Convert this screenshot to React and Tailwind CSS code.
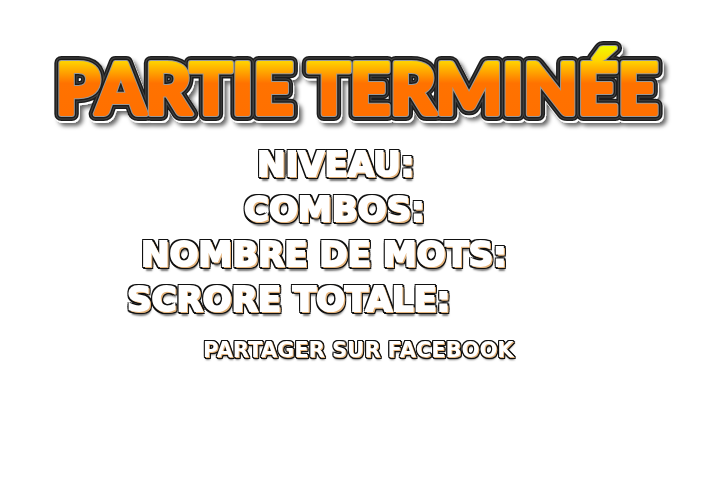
const outlined =
  "font-['DejaVu_Sans',sans-serif] font-bold text-white whitespace-nowrap";

const largeEdge =
  "[-webkit-text-stroke:2px_white] [text-shadow:2px_2px_0_#e5b47c,2px_1px_0_#e5b47c,1px_2px_0_#e5b47c,-2px_-2px_0_#111,0px_-2px_0_#111,2px_-2px_0_#111,-2px_0px_0_#111,-2px_2px_0_#111,3px_-1px_0_#111,3px_1px_0_#111,3px_3px_0_#111,1px_3px_0_#111,-1px_3px_0_#111,2px_5px_2px_#0008]";

const smallEdge =
  "[text-shadow:1px_1px_0_#e5b47c,-1px_-1px_0_#111,0px_-1px_0_#111,1px_-1px_0_#111,-1px_0px_0_#111,-1px_1px_0_#111,2px_0px_0_#111,2px_1px_0_#111,2px_2px_0_#111,1px_2px_0_#111,0px_2px_0_#111,1px_3px_2px_#0008]";

const rows = [
  { label: "NIVEAU:", indent: "pl-[257px]" },
  { label: "COMBOS:", indent: "pl-[244px]" },
  { label: "NOMBRE DE MOTS:", indent: "pl-[141px]" },
  { label: "SCRORE TOTALE:", indent: "pl-[127px]" },
];

function Title() {
  return (
    <h1 className="w-full">
      <svg viewBox="0 0 720 142" className="block w-full font-['Lato',sans-serif] text-[70px] font-black">
        <defs>
          <linearGradient id="fire" gradientUnits="userSpaceOnUse" x1="0" y1="44" x2="0" y2="114">
            <stop offset="0" stopColor="#eeff00" />
            <stop offset="0.24" stopColor="#ffd500" />
            <stop offset="0.56" stopColor="#ff7200" />
            <stop offset="1" stopColor="#ff7000" />
          </linearGradient>
          <filter id="cast" x="-5%" y="-20%" width="110%" height="150%">
            <feDropShadow dx="3" dy="3" stdDeviation="2" floodColor="#000" floodOpacity="0.6" />
          </filter>
        </defs>
        <g strokeLinejoin="round" textAnchor="middle">
          <g filter="url(#cast)">
            <use href="#word" x="1" y="2" fill="#fff" stroke="#fff" strokeWidth="14" />
          </g>
          <use href="#word" fill="#1c1c1c" stroke="#1c1c1c" strokeWidth="14" />
          <use href="#word" fill="#444" stroke="#444" strokeWidth="11" />
          <use href="#word" fill="#1c1c1c" stroke="#1c1c1c" strokeWidth="9" />
          <use href="#word" fill="#999" stroke="#999" strokeWidth="6" />
          <g fill="url(#fire)" stroke="url(#fire)" strokeWidth="4">
            <text id="word" x="357" y="114">PARTIE TERMINÉE</text>
          </g>
        </g>
      </svg>
    </h1>
  );
}

export default function App() {
  return (
    <main className="min-h-screen w-full overflow-hidden bg-white">
      <Title />
      <div className="will-change-transform">
        <ul>
          {rows.map((row) => (
            <li key={row.label} className={`${row.indent} ${outlined} ${largeEdge} text-[34px] leading-[45px]`}>
              {row.label}
            </li>
          ))}
        </ul>
        <div className="pt-3 pl-[203px]">
          <a href="#facebook" className={`${outlined} ${smallEdge} text-[21px] leading-8`}>
            PARTAGER SUR FACEBOOK
          </a>
        </div>
      </div>
    </main>
  );
}
